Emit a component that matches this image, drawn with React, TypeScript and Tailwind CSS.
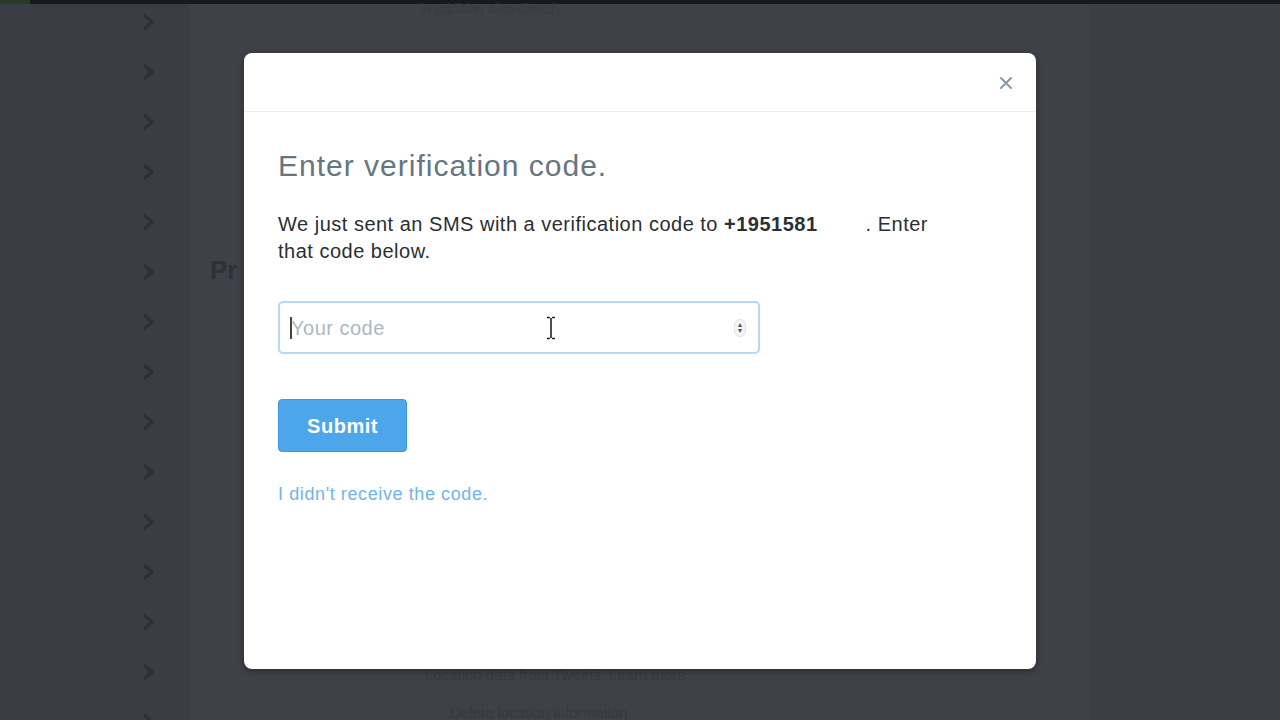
import React from "react";

const font = { fontFamily: '"Liberation Sans", Arial, Helvetica, sans-serif' };

function Chevron() {
  return (
    <svg width="14" height="18" viewBox="0 0 14 18" fill="none" className="block shrink-0">
      <path d="M3 2l8 7-8 7" stroke="#2d3035" strokeWidth="3.2" strokeLinecap="butt" />
    </svg>
  );
}

function IBeam() {
  return (
    <svg width="10" height="24" viewBox="0 0 10 24" fill="none">
      <path d="M1 1.5h3M6 1.5h3M5 2v20M1 22.5h3M6 22.5h3" stroke="#222" strokeWidth="1.6" />
    </svg>
  );
}

function Background() {
  const rows = Array.from({ length: 15 });
  return (
    <div className="flex h-[716px] w-full">
      <div className="w-[190px] shrink-0 bg-[#3a3d43] flex flex-col items-end pr-[35px] pt-[9px] gap-[32px] overflow-hidden">
        {rows.map((_, i) => (
          <Chevron key={i} />
        ))}
      </div>
      <div className="w-[900px] shrink-0 bg-[#3e4147] flex flex-col pl-[20px]">
        <div className="pl-[210px] text-[14px] text-[#393c41] leading-none -mt-[2px]">
          in addition also directly
        </div>
        <div className="mt-[241px] text-[26px] font-bold text-[#2e3136] leading-none">Pr</div>
        <div className="mt-[381px] pl-[215px] text-[15px] text-[#37393f]">
          Location data from Tweets. Learn more
        </div>
        <div className="mt-[17px] pl-[240px] text-[15px] leading-[18px] text-[#37393f]">
          Delete location information
        </div>
      </div>
      <div className="flex-1 bg-[#3b3e44]" />
    </div>
  );
}

function Modal() {
  return (
    <div className="absolute left-[244px] top-[53px] w-[792px] h-[616px] bg-white rounded-[8px] shadow-[0_2px_6px_rgba(0,0,0,0.35)] flex flex-col">
      <div className="h-[59px] border-b border-[#e6ecf0] flex items-center justify-end pr-[22px]">
        <svg width="16" height="16" viewBox="0 0 16 16" className="mt-[2px]">
          <path d="M3 3l10 10M13 3L3 13" stroke="#8899a6" strokeWidth="2" strokeLinecap="round" />
        </svg>
      </div>
      <div className="px-[34px] pt-[36px]">
        <h2 className="text-[30px] leading-[36px] text-[#66757f] font-normal tracking-[1px]">
          Enter verification code.
        </h2>
        <p className="mt-[27px] w-[670px] text-[20px] leading-[27px] tracking-[0.5px] text-[#292f33]">
          We just sent an SMS with a verification code to <b>+1951581</b>
          <span className="inline-block w-[48px]" />. Enter that code below.
        </p>
        <div className="mt-[36px] relative w-[482px] h-[53px] border-2 border-[#b5d8f3] rounded-[5px] flex items-center pl-[10px] pr-[12px]">
          <span className="w-[2px] h-[22px] bg-[#444]" />
          <span className="text-[20px] tracking-[0.5px] text-[#aab8c2] -ml-[1px]">Your code</span>
          <span className="absolute left-[266px] top-[13px]">
            <IBeam />
          </span>
          <span className="ml-auto flex flex-col items-center justify-center w-[12px] h-[18px] rounded-full bg-[#f2f4f5] border border-[#dde2e6]">
            <span className="text-[8px] leading-[6px] text-[#555]">▴</span>
            <span className="text-[8px] leading-[6px] text-[#555]">▾</span>
          </span>
        </div>
        <button className="mt-[45px] w-[129px] h-[53px] rounded-[4px] bg-[#4da6ea] text-white text-[20px] tracking-[0.5px] font-bold border border-[#3f99de]">
          Submit
        </button>
        <div className="mt-[29px] text-[18px] tracking-[0.6px] text-[#6eb6ec]">I didn't receive the code.</div>
      </div>
    </div>
  );
}

export default function App() {
  return (
    <div className="relative w-[1280px] h-[720px] overflow-hidden bg-[#17191c]" style={font}>
      <div className="h-[4px] flex">
        <div className="w-[30px] bg-[#2a3a22]" />
      </div>
      <Background />
      <Modal />
    </div>
  );
}
